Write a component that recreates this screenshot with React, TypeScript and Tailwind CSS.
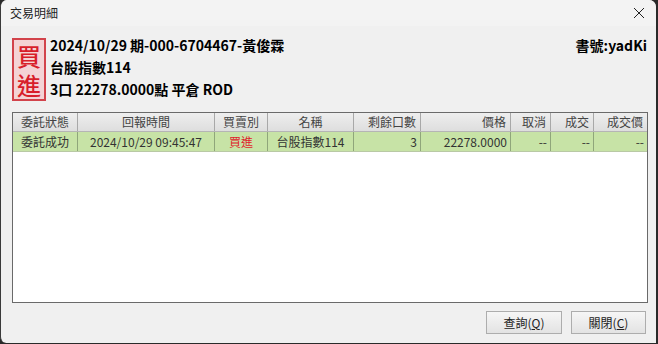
import React from 'react';

const cols = [
  { head: '委託狀態', val: '委託成功', w: 'w-[65px]', ha: 'justify-center', va: 'justify-center' },
  { head: '回報時間', val: '2024/10/29 09:45:47', w: 'w-[137px]', ha: 'justify-center', va: 'justify-center' },
  { head: '買賣別', val: '買進', w: 'w-[53px]', ha: 'justify-center', va: 'justify-center', red: true },
  { head: '名稱', val: '台股指數114', w: 'w-[86px]', ha: 'justify-center', va: 'justify-center' },
  { head: '剩餘口數', val: '3', w: 'w-[67px]', ha: 'justify-end', va: 'justify-end' },
  { head: '價格', val: '22278.0000', w: 'w-[90px]', ha: 'justify-end', va: 'justify-end' },
  { head: '取消', val: '--', w: 'w-[40px]', ha: 'justify-end', va: 'justify-end' },
  { head: '成交', val: '--', w: 'w-[43px]', ha: 'justify-end', va: 'justify-end' },
  { head: '成交價', val: '--', w: 'w-[53px]', ha: 'justify-end', va: 'justify-end' },
];

const font = { fontFamily: '"Noto Sans CJK TC", "Noto Sans", sans-serif' };

export default function App() {
  return (
    <div className="w-[658px] h-[344px] bg-[#2a2a2a] overflow-hidden" style={font}>
      <div className="w-[656px] h-[343px] flex flex-col bg-[#f0f0f0] rounded-tl-[7px] rounded-tr-[7px] rounded-bl-[6px] overflow-hidden border-l border-[#3a3a3a]">
        {/* title bar */}
        <div className="h-[26px] flex items-center justify-between pl-[9px] pr-[9px] bg-[#f3f3f3]">
          <span className="text-[12px] text-[#222]">交易明細</span>
          <svg width="12" height="12" viewBox="0 0 12 12" className="mr-[2px]">
            <path d="M1 1 L11 11 M11 1 L1 11" stroke="#222" strokeWidth="1" />
          </svg>
        </div>

        {/* order header */}
        <div className="flex items-start pl-[11px] pr-[9px] pt-[12px] h-[86px]">
          <div className="w-[34px] h-[63px] flex flex-col items-center justify-center bg-[#f4d3d5] border-[2px] border-[#d2434b] text-[#d81e2a] text-[24px] leading-[29px] font-medium">
            <span>買</span>
            <span>進</span>
          </div>
          <div className="flex-1 flex flex-col pl-[4px] text-[14px] font-bold text-black leading-[22px] -mt-[4px]">
            <div className="flex justify-between">
              <span>2024/10/29 期-000-6704467-黃俊霖</span>
              <span>書號:yadKi</span>
            </div>
            <span>台股指數114</span>
            <span>3口 22278.0000點 平倉 ROD</span>
          </div>
        </div>

        {/* grid */}
        <div className="ml-[11px] w-[636px] h-[191px] border border-[#6a6a6a] bg-white flex flex-col">
          <div className="flex h-[19px] bg-gradient-to-b from-[#eeeeee] to-[#dedede] border-b border-[#b5b5b5]">
            {cols.map((c, i) => (
              <div key={i} className={`${c.w} flex items-center ${c.ha} px-[4px] text-[12px] text-[#444] border-r border-[#a8a8a8] last:border-r-0`}>
                {c.head}
              </div>
            ))}
          </div>
          <div className="flex h-[20px] bg-[#c7e3a6] border-b border-[#b9c9a5]">
            {cols.map((c, i) => (
              <div key={i} className={`${c.w} flex items-center ${c.va} px-[3px] text-[12px] border-r border-[#8fa67a] last:border-r-0 ${c.red ? 'text-[#e0202a]' : 'text-[#333]'}`}>
                {c.val}
              </div>
            ))}
          </div>
        </div>

        {/* buttons */}
        <div className="flex justify-end gap-[9px] pr-[10px] pt-[8px]">
          <button className="w-[76px] h-[23px] text-[12px] text-[#222] border border-[#adadad] bg-gradient-to-b from-[#f6f6f6] to-[#e3e3e3]">
            查詢(<span className="underline">Q</span>)
          </button>
          <button className="w-[75px] h-[23px] text-[12px] text-[#222] border border-[#adadad] bg-gradient-to-b from-[#f6f6f6] to-[#e3e3e3]">
            關閉(<span className="underline">C</span>)
          </button>
        </div>
      </div>
    </div>
  );
}
